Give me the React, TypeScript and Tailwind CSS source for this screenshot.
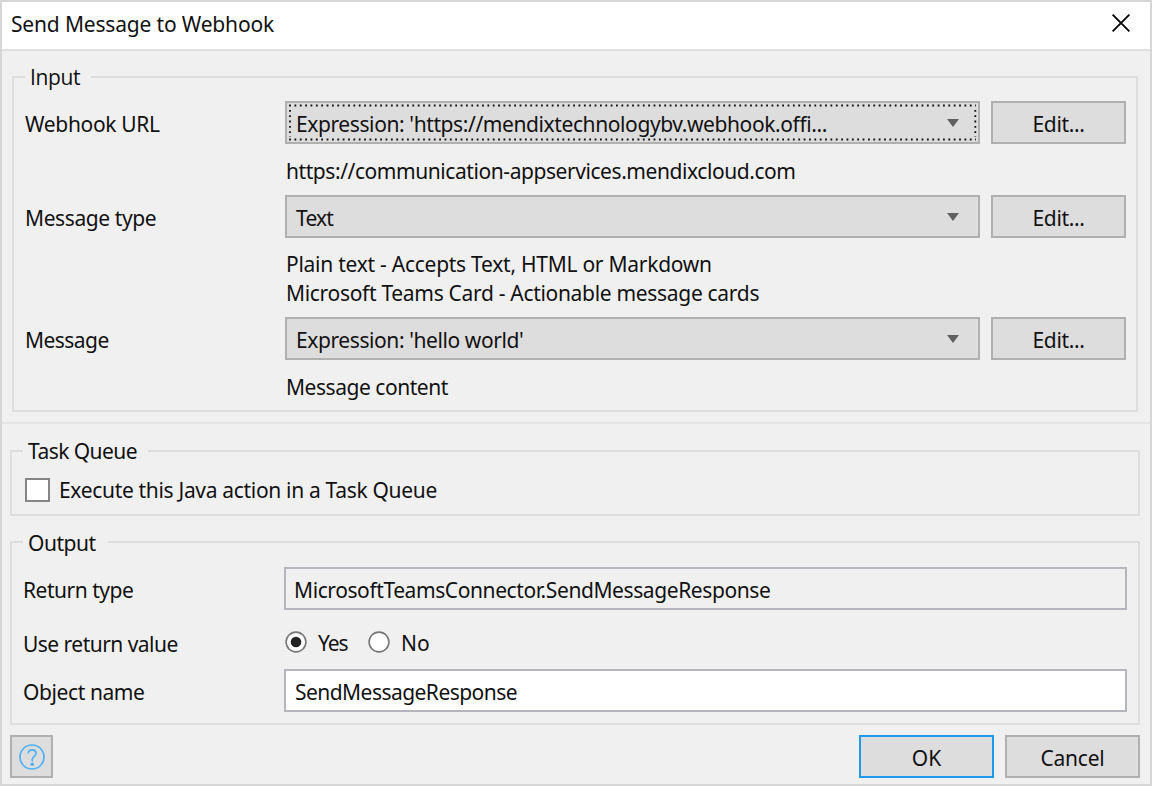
import type { ReactNode } from "react";

function Group({
  title,
  titleClass,
  className,
  children,
}: {
  title: string;
  titleClass: string;
  className: string;
  children: ReactNode;
}) {
  return (
    <fieldset className={`min-w-0 border-2 border-[#dedede] ${className}`}>
      <legend className={`h-[30px] pl-[5px] ${titleClass}`}>{title}</legend>
      {children}
    </fieldset>
  );
}

function Combo({ value, textClass, focused = false }: { value: string; textClass: string; focused?: boolean }) {
  return (
    <button
      type="button"
      className="relative flex h-[43px] w-[695px] items-center justify-between border-2 border-[#b0b0b0] bg-[#dddddd] pr-[19px] pl-[9px] text-left"
    >
      <span className={`pt-[2px] leading-[30px] whitespace-nowrap ${textClass}`}>{value}</span>
      <svg width="12" height="8" viewBox="0 0 12 8" className="mt-[1px]">
        <path d="M0 0H12L6 8Z" fill="#606060" />
      </svg>
      {focused && (
        <svg className="pointer-events-none absolute -top-[2px] -left-[2px]" width="695" height="43" fill="none" stroke="#111" strokeWidth="1.8">
          <path d="M4.1 4.5H691" strokeDasharray="1.8 3.56" />
          <path d="M4.1 38.5H691" strokeDasharray="1.8 3.56" />
          <path d="M5 9V36" strokeDasharray="1.8 3.5" />
          <path d="M690.3 9V36" strokeDasharray="1.8 3.5" />
        </svg>
      )}
    </button>
  );
}

function PushButton({ label, className, textClass = "" }: { label: string; className: string; textClass?: string }) {
  return (
    <button type="button" className={`flex h-[43px] w-[135px] items-center justify-center border-2 bg-[#dddddd] ${className}`}>
      <span className={`pt-[2px] leading-[30px] ${textClass}`}>{label}</span>
    </button>
  );
}

function ParameterRow({ label, labelClass, children }: { label: string; labelClass: string; children: ReactNode }) {
  return (
    <div className="flex h-[43px] items-center">
      <span className={`w-[260px] shrink-0 pt-[2px] leading-[30px] ${labelClass}`}>{label}</span>
      {children}
      <PushButton label="Edit..." className="ml-[11px] border-[#b0b0b0]" textClass="tracking-[-0.35px]" />
    </div>
  );
}

function Radio({ checked = false }: { checked?: boolean }) {
  return (
    <svg width="22" height="22" viewBox="0 0 22 22" className="shrink-0">
      <circle cx="11" cy="11" r="9.9" fill="#fff" stroke="#777" strokeWidth="1.6" />
      {checked && <circle cx="11" cy="11" r="5.3" fill="#222" />}
    </svg>
  );
}

export default function App() {
  return (
    <div className="flex h-[786px] w-[1152px] flex-col border-2 border-[#d6d6d6] bg-[#f0f0f0] font-['Noto_Sans','Open_Sans',sans-serif] text-[21px] text-[#111]">
      <header className="flex h-[47px] shrink-0 items-center justify-between bg-white pr-[20px] pl-[9px]">
        <h1 className="pb-[3px] leading-[30px] tracking-[-0.17px]">Send Message to Webhook</h1>
        <svg width="18" height="18" viewBox="0 0 18 18" className="mb-[5px]" fill="none" stroke="#000" strokeWidth="1.8">
          <path d="M0.6 0.6L17.4 17.4M17.4 0.6L0.6 17.4" />
        </svg>
      </header>

      <section className="h-[375px] shrink-0 border-t-2 border-b-2 border-t-[#e0e0e0] border-b-[#e4e4e4] pt-[11px] pr-[12px] pl-[10px]">
        <Group title="Input" titleClass="ml-[11px] w-[66px] leading-[30px] font-['Open_Sans'] tracking-[-0.35px]" className="h-[350px]">
          <div className="pt-[9px] pl-[11px]">
            <ParameterRow label="Webhook URL" labelClass="tracking-[-0.33px]">
              <Combo value="Expression: 'https://mendixtechnologybv.webhook.offi..." textClass="tracking-[-0.4px]" focused />
            </ParameterRow>
            <p className="h-[51px] pt-[13px] pl-[261px] leading-[29px] tracking-[-0.43px]">https://communication-appservices.mendixcloud.com</p>
            <ParameterRow label="Message type" labelClass="tracking-[-0.4px]">
              <Combo value="Text" textClass="tracking-[-0.8px]" />
            </ParameterRow>
            <div className="h-[79px] pt-[12px] pl-[261px] leading-[29px]">
              <p className="tracking-[-0.26px]">Plain text - Accepts Text, HTML or Markdown</p>
              <p className="tracking-[-0.31px]">Microsoft Teams Card - Actionable message cards</p>
            </div>
            <ParameterRow label="Message" labelClass="tracking-[-0.55px]">
              <Combo value="Expression: 'hello world'" textClass="tracking-[-0.41px]" />
            </ParameterRow>
            <p className="pt-[13px] pl-[261px] leading-[29px] tracking-[-0.46px]">Message content</p>
          </div>
        </Group>
      </section>

      <section className="flex flex-col gap-[11px] pt-[12px] pr-[10px] pl-[8px]">
        <Group title="Task Queue" titleClass="ml-[11px] w-[125px] leading-[30px] tracking-[-0.55px]" className="h-[80px]">
          <label className="flex items-center pt-[9px] pl-[13px]">
            <span className="mr-[9px] h-[24px] w-[25px] border-2 border-[#858585] bg-white" />
            <span className="leading-[30px] tracking-[-0.32px]">Execute this Java action in a Task Queue</span>
          </label>
        </Group>

        <Group title="Output" titleClass="ml-[11px] w-[85px] leading-[32px] tracking-[-0.45px]" className="h-[198px]">
          <div className="flex flex-col pt-[10px] pl-[11px]">
            <div className="flex h-[43px] items-center">
              <span className="w-[261px] pt-[2px] leading-[30px] tracking-[-0.48px]">Return type</span>
              <div className="flex h-[43px] w-[843px] items-center border-2 border-[#b5b6bb] pl-[8px]">
                <span className="pt-[2px] leading-[30px] tracking-[-0.41px]">MicrosoftTeamsConnector.SendMessageResponse</span>
              </div>
            </div>
            <div className="flex h-[59px] items-center pt-[6px]">
              <span className="w-[262px] pt-[2px] leading-[30px] tracking-[-0.53px]">Use return value</span>
              <label className="flex items-center pb-[2px]">
                <Radio checked />
                <span className="ml-[11px] w-[50px] pt-[2px] leading-[30px] tracking-[-1.1px]">Yes</span>
              </label>
              <label className="flex items-center pb-[2px]">
                <Radio />
                <span className="ml-[11px] pt-[2px] leading-[30px]">No</span>
              </label>
            </div>
            <div className="flex h-[43px] items-center">
              <span className="w-[261px] pt-[2px] leading-[30px] tracking-[-0.4px]">Object name</span>
              <div className="flex h-[43px] w-[843px] items-center border-2 border-[#b5b6bb] bg-white pl-[9px]">
                <span className="pt-[2px] leading-[30px] tracking-[-0.54px]">SendMessageResponse</span>
              </div>
            </div>
          </div>
        </Group>
      </section>

      <footer className="flex items-center pt-[10px] pr-[10px] pl-[8px]">
        <button type="button" aria-label="Help" className="mr-auto flex size-[43px] items-center justify-center border-2 border-[#b0b0b0] bg-[#dddddd]">
          <svg width="26" height="26" viewBox="0 0 26 26" fill="none" stroke="#4db1f6" strokeWidth="1.7">
            <circle cx="13" cy="13" r="12" />
            <path d="M9.2 9.6C9.2 7.2 10.8 5.9 13.1 5.9C15.4 5.9 17 7.3 17 9.4C17 12.2 13.3 12.6 13.3 15.6V17.4" />
            <circle cx="13.2" cy="20.3" r="1.8" fill="#4db1f6" stroke="none" />
          </svg>
        </button>
        <PushButton label="OK" className="mr-[11px] border-[#1c9bec]" />
        <PushButton label="Cancel" className="border-[#b0b0b0]" textClass="tracking-[-0.2px]" />
      </footer>
    </div>
  );
}
